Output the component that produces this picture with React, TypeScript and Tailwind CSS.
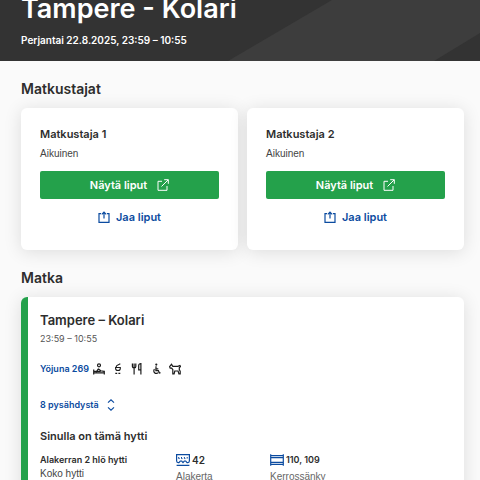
/**
 * App.tsx — Ticket page for a night train trip.
 * Contains: trip header, passenger cards with ticket actions,
 * and the journey card with services, stops and cabin details.
 */
import type { ReactNode } from 'react';

const passengers = [
  { name: 'Matkustaja 1', type: 'Aikuinen' },
  { name: 'Matkustaja 2', type: 'Aikuinen' },
];

type IconProps = { label?: string; size?: string; width?: number; children: ReactNode };

/** Shared outline icon wrapper on a 12px grid */
function Icon({ label, size = 'h-3 w-3', width = 12, children }: IconProps) {
  return (
    <svg
      className={`${size} shrink-0`}
      viewBox={`0 0 ${width} 12`}
      fill="none"
      stroke="currentColor"
      strokeWidth="1.2"
      role={label ? 'img' : undefined}
      aria-label={label}
      aria-hidden={label ? undefined : true}
    >
      {children}
    </svg>
  );
}

/** Onboard services shown next to the train number */
function Services() {
  return (
    <div className="flex items-center gap-[7px] text-[#1c1c1c]">
      <Icon label="Makuuvaunu">
        <circle cx="6" cy="2.3" r="1.5" />
        <path d="M.7 6.6v5M11.3 7.8v3.8M.7 9.9h10.6M1.2 8.2l2.2.3 2-2.6M5.2 5.6l2.5 2.2 3.3.6M3.6 8.4h4" />
      </Icon>
      <Icon label="Ravintolavaunu">
        <path d="M8.3.7 4.8 2.6 4 4.2M3.6 4.5h4.7v1c0 1.3-.9 2-2.3 2s-2.4-.7-2.4-2z" strokeWidth="1.1" />
        <path d="M3.3 10.4h1.9M6.4 10.4h1.9" />
      </Icon>
      <Icon label="Ravintola">
        <path d="M1.4.4v3.2c0 1 .6 1.5 1.7 1.5s1.7-.5 1.7-1.5V.4M3.1.4v11.2M9.9 6.8H7.7V2.6C7.7 1.2 8.5.7 9.9.7v10.9" />
      </Icon>
      <Icon label="Esteetön">
        <path d="M6 3.2v2.6h2.3M5.9 5.2v2.5h2.5l1 2.3 1.1-.4M4.5 6.1a2.5 2.5 0 1 0 3.7 3.5" />
        <circle cx="6.3" cy="1.6" r=".5" />
      </Icon>
      <Icon label="Lemmikit">
        <path d="M.6 3.6 2.5 1.3l1.3 2.1h5.1l2-.9.6.8-1.2 1.5v1.8l.9 1.7v2.5H9.9L9.1 8H5.8l-.7 2.8H3.8V6.5L2.6 5.2H1.2z" />
      </Icon>
    </div>
  );
}

/** Single passenger card with the show and share actions */
function PassengerCard({ name, type }: { name: string; type: string }) {
  return (
    <article className="rounded-md bg-white px-[19px] pt-[18px] pb-[23px] shadow-[0_2px_18px_rgba(0,0,0,0.12)]">
      <h3 className="text-[11px] leading-4 font-semibold">{name}</h3>
      <p className="mt-1 font-['Liberation_Sans',sans-serif] text-[10px] leading-4 text-[#444]">{type}</p>
      <button className="mt-[9px] flex h-7 w-full items-center justify-center gap-[10px] rounded-xs bg-[#24a14b] text-[11px] font-semibold text-white">
        Näytä liput
        <Icon>
          <path d="M5 2.3H1v9h9V7M4.5 7.5 11.2.8M7.2.7h4.1v4.1" strokeWidth="1" />
        </Icon>
      </button>
      <button className="mt-2 flex h-5 w-full items-center justify-center gap-[6px] text-[11px] font-semibold text-[#0b4ba0]">
        <Icon>
          <path d="M3 2.7H1v8.6h10V2.7H9M6 7.6V1M3.8 3.3 6 1l2.2 2.3" />
        </Icon>
        Jaa liput
      </button>
    </article>
  );
}

/** Cabin name, coach and berths */
function CabinDetails() {
  return (
    <div className="mt-[9px] grid grid-cols-[136px_94px_1fr]">
      <div>
        <p className="text-[9px] leading-[14px] font-semibold">Alakerran 2 hlö hytti</p>
        <p className="font-['Liberation_Sans',sans-serif] text-[10px] leading-[14px] text-[#444]">Koko hytti</p>
      </div>
      <div>
        <p className="flex h-[14px] items-center gap-[2px] text-[10px] font-semibold">
          <span className="text-[#0b4ba0]">
            <Icon size="h-3 w-[14px]" width={14} label="Vaunu">
              <path d="M.6.7h12.8v6.1c0 1.2-.5 1.8-1.5 1.8h-.8L9.7 7H8.3L7 8.6 5.7 7H4.3L2.9 8.6h-.8C1.1 8.6.6 8 .6 6.8zM.6 11.3h12.8" />
              <path d="M2.7 3v1.6M5.5 3v1.6M8.4 3v1.6M11.2 3v1.6M2.7 4.6h1M5.5 4.6h1M8.4 4.6h1" strokeWidth="1" />
            </Icon>
          </span>
          42
        </p>
        <p className="mt-[3px] font-['Liberation_Sans',sans-serif] text-[10px] leading-[14px] text-[#666]">Alakerta</p>
      </div>
      <div>
        <p className="flex h-[14px] items-center gap-[2px] text-[9px] font-semibold">
          <span className="text-[#0b4ba0]">
            <Icon size="h-3 w-[14px]" width={14} label="Vuodepaikat">
              <path d="M.7.3v11.4M13.3.3v11.4M.7 1.6h12.6M.7 3.6h12.6M.7 8.4h12.6M.7 10.4h12.6" />
            </Icon>
          </span>
          110, 109
        </p>
        <p className="mt-[3px] font-['Liberation_Sans',sans-serif] text-[10px] leading-[14px] text-[#666]">Kerrossänky</p>
      </div>
    </div>
  );
}

/** Renders the whole ticket page */
export default function App() {
  return (
    <div className="h-screen overflow-hidden bg-[#fafafa] font-['Inter',sans-serif] text-[#2d2d2d]">
      <header className="relative bg-[#333] pr-4 pb-[13px] pl-[21px] text-white">
        <svg
          className="absolute inset-0 h-full w-full"
          viewBox="0 0 480 61"
          preserveAspectRatio="none"
          aria-hidden="true"
        >
          <path d="M332 0h148v33l-46 28H228z" fill="#3d3d3d" />
        </svg>
        <div className="relative">
          <h1 className="text-[27px] leading-[18px] font-semibold">Tampere - Kolari</h1>
          <p className="pt-[14px] text-[10px] leading-4 font-semibold">Perjantai 22.8.2025, 23:59 – 10:55</p>
        </div>
      </header>

      <main className="pr-4 pl-[21px]">
        <section>
          <h2 className="pt-[18px] pb-[9px] text-sm leading-5 font-semibold">Matkustajat</h2>
          <div className="grid grid-cols-2 gap-[9px]">
            {passengers.map((p) => (
              <PassengerCard key={p.name} name={p.name} type={p.type} />
            ))}
          </div>
        </section>

        <section>
          <h2 className="pt-[18px] pb-[9px] text-sm leading-5 font-semibold">Matka</h2>
          <article className="flex overflow-hidden rounded-md bg-white shadow-[0_2px_18px_rgba(0,0,0,0.12)]">
            <div className="w-[7px] shrink-0 bg-[#24a14b]" />
            <div className="flex-1 px-3 pt-[13px] pb-6">
              <h3 className="text-[13px] leading-5 font-semibold">Tampere – Kolari</h3>
              <p className="mt-[1px] text-[9px] leading-4 text-[#555]">23:59 – 10:55</p>
              <div className="mt-[14px] flex items-center gap-1">
                <a href="#juna" className="text-[9px] leading-4 font-semibold text-[#0b4ba0]">
                  Yöjuna 269
                </a>
                <Services />
              </div>
              <button className="mt-5 flex h-4 items-center gap-[6px] text-[9px] font-semibold text-[#0b4ba0]">
                8 pysähdystä
                <Icon>
                  <path d="M3 3.6 6 .9l3 2.7M3 8.4l3 2.7 3-2.7" />
                </Icon>
              </button>
              <h4 className="mt-[15px] text-[11px] leading-4 font-semibold">Sinulla on tämä hytti</h4>
              <CabinDetails />
            </div>
          </article>
        </section>
      </main>
    </div>
  );
}
